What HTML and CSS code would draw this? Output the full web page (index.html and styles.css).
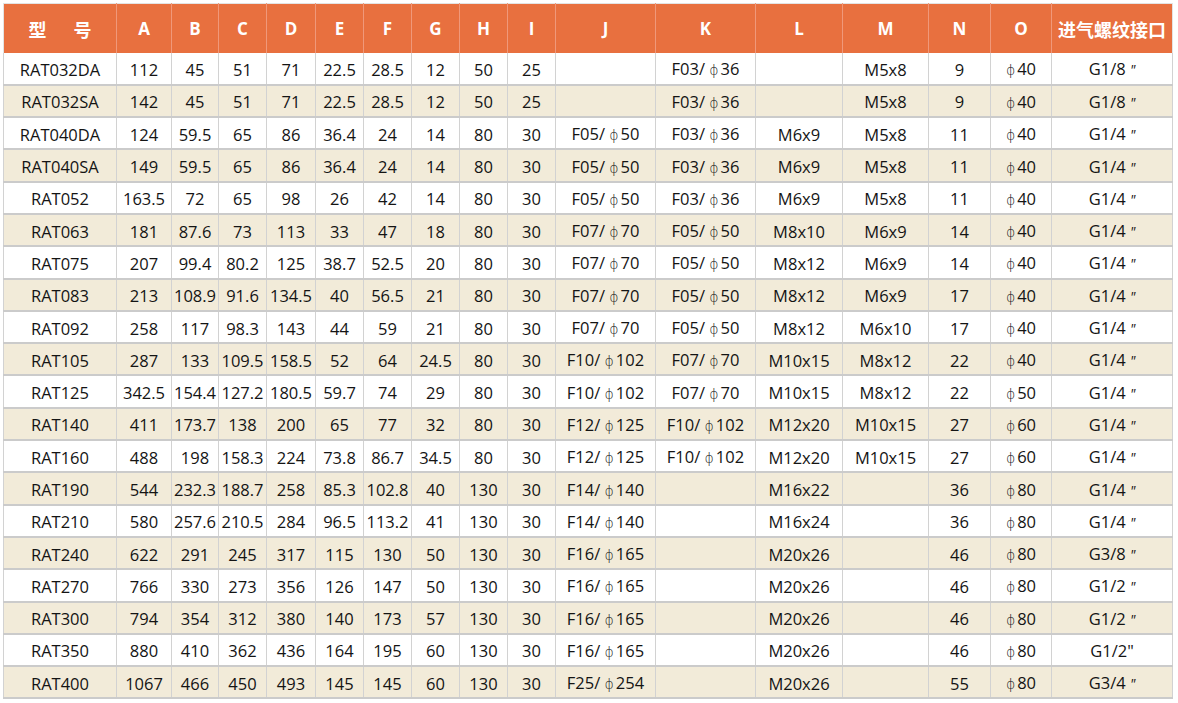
FILE: index.html
```html
<!DOCTYPE html>
<html lang="zh">
<head>
<meta charset="utf-8">
<title>RAT 尺寸表</title>
<link rel="stylesheet" href="styles.css">
</head>
<body>
<div class="wrap">
<table class="spec">
<colgroup>
<col class="w-model"><col class="w-a"><col class="w-b"><col class="w-c"><col class="w-d"><col class="w-e"><col class="w-f"><col class="w-g"><col class="w-h"><col class="w-i"><col class="w-j"><col class="w-k"><col class="w-l"><col class="w-m"><col class="w-n"><col class="w-o"><col class="w-port">
</colgroup>
<thead>
<tr>
<th><span class="xing">型</span><span>号</span></th><th>A</th><th>B</th><th>C</th><th>D</th><th>E</th><th>F</th><th>G</th><th>H</th><th>I</th><th>J</th><th>K</th><th>L</th><th>M</th><th>N</th><th>O</th><th class="cjk">进气螺纹接口</th>
</tr>
</thead>
<tbody>
<tr><td>RAT032DA</td><td>112</td><td>45</td><td>51</td><td>71</td><td>22.5</td><td>28.5</td><td>12</td><td>50</td><td>25</td><td></td><td>F03/ <span class="phi">ϕ</span>36</td><td></td><td>M5x8</td><td>9</td><td><span class="phi">ϕ</span>40</td><td>G1/8 <span class="inch">"</span></td></tr>
<tr><td>RAT032SA</td><td>142</td><td>45</td><td>51</td><td>71</td><td>22.5</td><td>28.5</td><td>12</td><td>50</td><td>25</td><td></td><td>F03/ <span class="phi">ϕ</span>36</td><td></td><td>M5x8</td><td>9</td><td><span class="phi">ϕ</span>40</td><td>G1/8 <span class="inch">"</span></td></tr>
<tr><td>RAT040DA</td><td>124</td><td>59.5</td><td>65</td><td>86</td><td>36.4</td><td>24</td><td>14</td><td>80</td><td>30</td><td>F05/ <span class="phi">ϕ</span>50</td><td>F03/ <span class="phi">ϕ</span>36</td><td>M6x9</td><td>M5x8</td><td>11</td><td><span class="phi">ϕ</span>40</td><td>G1/4 <span class="inch">"</span></td></tr>
<tr><td>RAT040SA</td><td>149</td><td>59.5</td><td>65</td><td>86</td><td>36.4</td><td>24</td><td>14</td><td>80</td><td>30</td><td>F05/ <span class="phi">ϕ</span>50</td><td>F03/ <span class="phi">ϕ</span>36</td><td>M6x9</td><td>M5x8</td><td>11</td><td><span class="phi">ϕ</span>40</td><td>G1/4 <span class="inch">"</span></td></tr>
<tr><td>RAT052</td><td>163.5</td><td>72</td><td>65</td><td>98</td><td>26</td><td>42</td><td>14</td><td>80</td><td>30</td><td>F05/ <span class="phi">ϕ</span>50</td><td>F03/ <span class="phi">ϕ</span>36</td><td>M6x9</td><td>M5x8</td><td>11</td><td><span class="phi">ϕ</span>40</td><td>G1/4 <span class="inch">"</span></td></tr>
<tr><td>RAT063</td><td>181</td><td>87.6</td><td>73</td><td>113</td><td>33</td><td>47</td><td>18</td><td>80</td><td>30</td><td>F07/ <span class="phi">ϕ</span>70</td><td>F05/ <span class="phi">ϕ</span>50</td><td>M8x10</td><td>M6x9</td><td>14</td><td><span class="phi">ϕ</span>40</td><td>G1/4 <span class="inch">"</span></td></tr>
<tr><td>RAT075</td><td>207</td><td>99.4</td><td>80.2</td><td>125</td><td>38.7</td><td>52.5</td><td>20</td><td>80</td><td>30</td><td>F07/ <span class="phi">ϕ</span>70</td><td>F05/ <span class="phi">ϕ</span>50</td><td>M8x12</td><td>M6x9</td><td>14</td><td><span class="phi">ϕ</span>40</td><td>G1/4 <span class="inch">"</span></td></tr>
<tr><td>RAT083</td><td>213</td><td>108.9</td><td>91.6</td><td>134.5</td><td>40</td><td>56.5</td><td>21</td><td>80</td><td>30</td><td>F07/ <span class="phi">ϕ</span>70</td><td>F05/ <span class="phi">ϕ</span>50</td><td>M8x12</td><td>M6x9</td><td>17</td><td><span class="phi">ϕ</span>40</td><td>G1/4 <span class="inch">"</span></td></tr>
<tr><td>RAT092</td><td>258</td><td>117</td><td>98.3</td><td>143</td><td>44</td><td>59</td><td>21</td><td>80</td><td>30</td><td>F07/ <span class="phi">ϕ</span>70</td><td>F05/ <span class="phi">ϕ</span>50</td><td>M8x12</td><td>M6x10</td><td>17</td><td><span class="phi">ϕ</span>40</td><td>G1/4 <span class="inch">"</span></td></tr>
<tr><td>RAT105</td><td>287</td><td>133</td><td>109.5</td><td>158.5</td><td>52</td><td>64</td><td>24.5</td><td>80</td><td>30</td><td>F10/ <span class="phi">ϕ</span>102</td><td>F07/ <span class="phi">ϕ</span>70</td><td>M10x15</td><td>M8x12</td><td>22</td><td><span class="phi">ϕ</span>40</td><td>G1/4 <span class="inch">"</span></td></tr>
<tr><td>RAT125</td><td>342.5</td><td>154.4</td><td>127.2</td><td>180.5</td><td>59.7</td><td>74</td><td>29</td><td>80</td><td>30</td><td>F10/ <span class="phi">ϕ</span>102</td><td>F07/ <span class="phi">ϕ</span>70</td><td>M10x15</td><td>M8x12</td><td>22</td><td><span class="phi">ϕ</span>50</td><td>G1/4 <span class="inch">"</span></td></tr>
<tr><td>RAT140</td><td>411</td><td>173.7</td><td>138</td><td>200</td><td>65</td><td>77</td><td>32</td><td>80</td><td>30</td><td>F12/ <span class="phi">ϕ</span>125</td><td>F10/ <span class="phi">ϕ</span>102</td><td>M12x20</td><td>M10x15</td><td>27</td><td><span class="phi">ϕ</span>60</td><td>G1/4 <span class="inch">"</span></td></tr>
<tr><td>RAT160</td><td>488</td><td>198</td><td>158.3</td><td>224</td><td>73.8</td><td>86.7</td><td>34.5</td><td>80</td><td>30</td><td>F12/ <span class="phi">ϕ</span>125</td><td>F10/ <span class="phi">ϕ</span>102</td><td>M12x20</td><td>M10x15</td><td>27</td><td><span class="phi">ϕ</span>60</td><td>G1/4 <span class="inch">"</span></td></tr>
<tr><td>RAT190</td><td>544</td><td>232.3</td><td>188.7</td><td>258</td><td>85.3</td><td>102.8</td><td>40</td><td>130</td><td>30</td><td>F14/ <span class="phi">ϕ</span>140</td><td></td><td>M16x22</td><td></td><td>36</td><td><span class="phi">ϕ</span>80</td><td>G1/4 <span class="inch">"</span></td></tr>
<tr><td>RAT210</td><td>580</td><td>257.6</td><td>210.5</td><td>284</td><td>96.5</td><td>113.2</td><td>41</td><td>130</td><td>30</td><td>F14/ <span class="phi">ϕ</span>140</td><td></td><td>M16x24</td><td></td><td>36</td><td><span class="phi">ϕ</span>80</td><td>G1/4 <span class="inch">"</span></td></tr>
<tr><td>RAT240</td><td>622</td><td>291</td><td>245</td><td>317</td><td>115</td><td>130</td><td>50</td><td>130</td><td>30</td><td>F16/ <span class="phi">ϕ</span>165</td><td></td><td>M20x26</td><td></td><td>46</td><td><span class="phi">ϕ</span>80</td><td>G3/8 <span class="inch">"</span></td></tr>
<tr><td>RAT270</td><td>766</td><td>330</td><td>273</td><td>356</td><td>126</td><td>147</td><td>50</td><td>130</td><td>30</td><td>F16/ <span class="phi">ϕ</span>165</td><td></td><td>M20x26</td><td></td><td>46</td><td><span class="phi">ϕ</span>80</td><td>G1/2 <span class="inch">"</span></td></tr>
<tr><td>RAT300</td><td>794</td><td>354</td><td>312</td><td>380</td><td>140</td><td>173</td><td>57</td><td>130</td><td>30</td><td>F16/ <span class="phi">ϕ</span>165</td><td></td><td>M20x26</td><td></td><td>46</td><td><span class="phi">ϕ</span>80</td><td>G1/2 <span class="inch">"</span></td></tr>
<tr><td>RAT350</td><td>880</td><td>410</td><td>362</td><td>436</td><td>164</td><td>195</td><td>60</td><td>130</td><td>30</td><td>F16/ <span class="phi">ϕ</span>165</td><td></td><td>M20x26</td><td></td><td>46</td><td><span class="phi">ϕ</span>80</td><td>G1/2"</td></tr>
<tr><td>RAT400</td><td>1067</td><td>466</td><td>450</td><td>493</td><td>145</td><td>145</td><td>60</td><td>130</td><td>30</td><td>F25/ <span class="phi">ϕ</span>254</td><td></td><td>M20x26</td><td></td><td>55</td><td><span class="phi">ϕ</span>80</td><td>G3/4 <span class="inch">"</span></td></tr>
</tbody>
</table>
</div>
</body>
</html>
```
FILE: styles.css
```css
html, body {
  margin: 0;
  padding: 0;
  background: #ffffff;
}

.wrap {
  padding: 3px 0 0 3px;
}

.spec {
  border-collapse: collapse;
  table-layout: fixed;
  width: 1170px;
  font-family: "Open Sans", "Noto Sans CJK SC", sans-serif;
  font-size: 16.5px;
  line-height: 20px;
  color: #141414;
}

.w-model { width: 113px; }
.w-a { width: 55px; }
.w-b { width: 47px; }
.w-c { width: 48px; }
.w-d { width: 49px; }
.w-e { width: 48px; }
.w-f { width: 48px; }
.w-g { width: 48px; }
.w-h { width: 48px; }
.w-i { width: 48px; }
.w-j { width: 100px; }
.w-k { width: 100px; }
.w-l { width: 87px; }
.w-m { width: 86px; }
.w-n { width: 62px; }
.w-o { width: 61px; }
.w-port { width: 121px; }

.spec thead tr {
  height: 49px;
}

.spec tbody tr {
  height: 32.3px;
}

.spec th {
  padding: 2px 0 0;
  background: #e8703f;
  color: #ffffff;
  font-weight: 700;
  font-size: 17px;
  text-align: center;
  border-left: 1px solid #f0987a;
  border-right: 1px solid #f0987a;
  border-top: 1px solid #e3e3e3;
  white-space: nowrap;
  overflow: hidden;
}

.spec th:first-child {
  border-left: 1px solid #e3e3e3;
}

.spec th:last-child {
  border-right: 1px solid #e3e3e3;
}

.spec th.cjk,
.spec th:first-child {
  font-family: "Noto Sans CJK SC", sans-serif;
  font-size: 18px;
}

.xing {
  margin-right: 27px;
}

.spec td {
  padding: 3px 0 0;
  text-align: center;
  white-space: nowrap;
  border-left: 1px solid #d2d2d2;
  border-right: 1px solid #d2d2d2;
  border-bottom: 2px solid #cbcbcb;
}

.spec tbody tr:nth-child(even) td {
  background: #f2ebd9;
}

.spec tbody tr:nth-child(odd) td {
  background: #ffffff;
}

.phi {
  font-family: "DejaVu Sans", sans-serif;
  font-weight: 200;
  font-size: 14px;
  margin-right: 2px;
}

.inch {
  font-style: italic;
  font-size: 14px;
}
```
